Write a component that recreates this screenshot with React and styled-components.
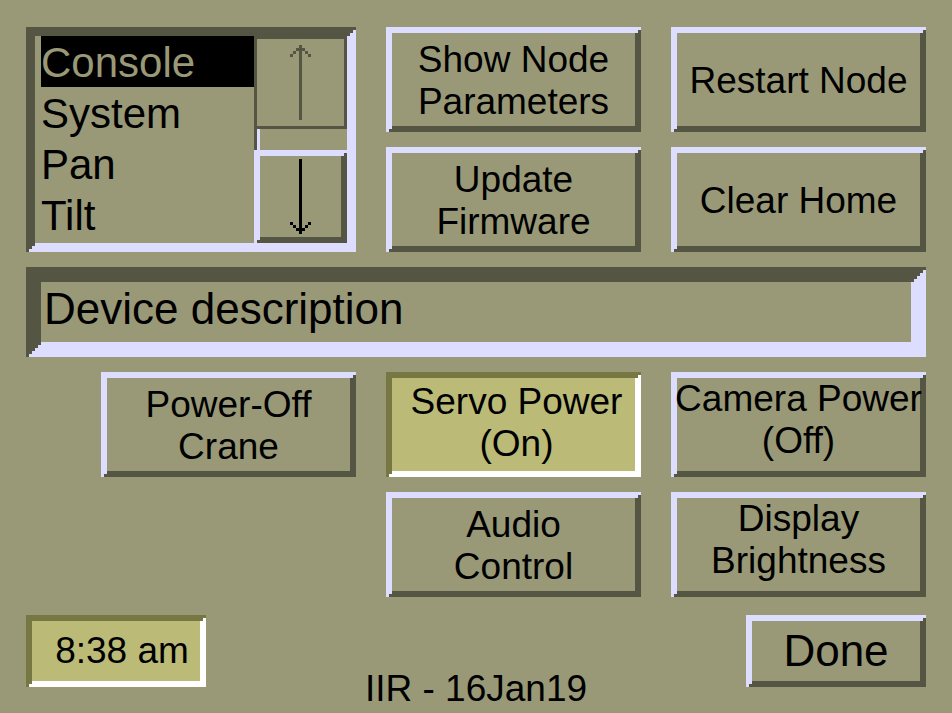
import React, { useState } from "react";
import styled, { createGlobalStyle, css } from "styled-components";

const color = {
  face: "#999977",
  dark: "#555544",
  light: "#ddddff",
  litFace: "#bbbb77",
  litDark: "#777744",
  litLight: "#ffffff",
  ink: "#000000",
};

// Stepped bevel made of 3px rings; the top-left colour wins at the corners.
const bevel = (rings, topLeft, bottomRight) =>
  Array.from({ length: rings }, (_, i) => {
    const d = (i + 1) * 3;
    return `inset ${d}px ${d}px 0 ${topLeft}, inset -${d}px -${d}px 0 ${bottomRight}`;
  }).join(", ");

const GlobalStyle = createGlobalStyle`
  *, *::before, *::after { box-sizing: border-box; }
  body {
    margin: 0;
    background: ${color.face};
    color: ${color.ink};
    font-family: "Liberation Sans", Arial, sans-serif;
    font-size: 37px;
    line-height: 42px;
  }
  button, input { font: inherit; color: inherit; border: 0; border-radius: 0; margin: 0; padding: 0; }
`;

const Screen = styled.main`
  min-height: 100vh;
  padding: 27px 26px 0;
  display: flex;
  flex-direction: column;
  gap: 15px;
`;

const Panel = styled.section`
  display: grid;
  grid-template-columns: minmax(0, 330fr) minmax(0, 255fr) minmax(0, 255fr);
  grid-auto-rows: minmax(105px, auto);
  gap: 15px 30px;
`;

const lifts = { none: "2px 0 0", slight: "0 0 4px 6px", high: "0 0 10px" };

const PushButton = styled.button`
  display: flex;
  flex-direction: column;
  align-items: center;
  justify-content: center;
  white-space: nowrap;
  background: ${color.face};
  box-shadow: ${bevel(2, color.light, color.dark)};

  && {
    padding: ${({ $lift = "none" }) => lifts[$lift]};
  }

  ${({ $lit }) =>
    $lit &&
    css`
      background: ${color.litFace};
      box-shadow: ${bevel(2, color.litDark, color.litLight)};
    `}
`;

const IndentedButton = styled(PushButton)`
  && {
    margin-left: 75px;
  }
`;

const AudioButton = styled(PushButton)`
  grid-column: 2;
`;

const Line = styled.span`
  display: block;
`;

const NodePicker = styled.div`
  grid-row: span 2;
  display: grid;
  grid-template-columns: minmax(0, 1fr) 93px;
  padding: 9px 9px 9px 15px;
  box-shadow: ${bevel(3, color.dark, color.light)};
`;

const NodeList = styled.ul`
  margin: 0;
  padding: 0;
  list-style: none;
  font-size: 42px;
  line-height: 53px;
`;

const NodeItem = styled.li`
  height: 51px;
  cursor: default;
  background: ${({ $selected }) => ($selected ? color.ink : "transparent")};
  color: ${({ $selected }) => ($selected ? color.face : color.ink)};
`;

const ScrollBar = styled.div`
  display: flex;
  flex-direction: column;
`;

const Track = styled.div`
  flex: 1;
  box-shadow: inset 3px 0 0 ${color.dark}, inset 6px 0 0 ${color.light};
`;

const ScrollButton = styled.button`
  height: 93px;
  display: grid;
  place-items: center;
  background: ${color.face};
  box-shadow: ${bevel(2, color.light, color.dark)};

  &:disabled {
    color: ${color.dark};
    box-shadow: inset 0 0 0 3px ${color.dark};
  }
`;

const ArrowSvg = styled.svg`
  width: 21px;
  height: 75px;
  display: block;
  fill: currentColor;
`;

const Description = styled.input`
  width: 100%;
  height: 90px;
  background: ${color.face};
  box-shadow: ${bevel(5, color.dark, color.light)};
  outline: none;

  && {
    padding: 0 15px 6px 18px;
    font-size: 44px;
  }
`;

const Footer = styled.footer`
  margin-top: 3px;
  display: grid;
  grid-template-columns: 180px 1fr 180px;
  min-height: 95px;
`;

const Clock = styled.time`
  height: 72px;
  padding-left: 12px;
  display: grid;
  place-items: center;
  background: ${color.litFace};
  box-shadow: ${bevel(2, color.litDark, color.litLight)};
`;

const Version = styled.span`
  align-self: end;
  text-align: center;
`;

const DoneButton = styled(PushButton)`
  height: 72px;

  && {
    padding: 0;
    font-size: 44px;
  }
`;

const arrowPaths = {
  up: "M3 0h1v25h-1zM2 1h3v1h-3zM1 2h1v1h-1zM5 2h1v1h-1zM0 3h1v1h-1zM6 3h1v1h-1z",
  down: "M3 0h1v25h-1zM2 23h3v1h-3zM1 22h1v1h-1zM5 22h1v1h-1zM0 21h1v1h-1zM6 21h1v1h-1z",
};

function Arrow({ direction }) {
  return (
    <ArrowSvg viewBox="0 0 7 25" shapeRendering="crispEdges" aria-hidden="true">
      <path d={arrowPaths[direction]} />
    </ArrowSvg>
  );
}

const nodes = ["Console", "System", "Pan", "Tilt"];

export default function App() {
  const [selected, setSelected] = useState("Console");

  return (
    <>
      <GlobalStyle />
      <Screen>
        <Panel>
          <NodePicker>
            <NodeList role="listbox" aria-label="Nodes">
              {nodes.map((node) => (
                <NodeItem
                  key={node}
                  role="option"
                  aria-selected={node === selected}
                  $selected={node === selected}
                  onClick={() => setSelected(node)}
                >
                  {node}
                </NodeItem>
              ))}
            </NodeList>
            <ScrollBar>
              <ScrollButton type="button" aria-label="Scroll up" disabled>
                <Arrow direction="up" />
              </ScrollButton>
              <Track />
              <ScrollButton type="button" aria-label="Scroll down">
                <Arrow direction="down" />
              </ScrollButton>
            </ScrollBar>
          </NodePicker>
          <PushButton type="button">
            <Line>Show Node</Line>
            <Line>Parameters</Line>
          </PushButton>
          <PushButton type="button">
            <Line>Restart Node</Line>
          </PushButton>
          <PushButton type="button">
            <Line>Update</Line>
            <Line>Firmware</Line>
          </PushButton>
          <PushButton type="button">
            <Line>Clear Home</Line>
          </PushButton>
        </Panel>

        <Description aria-label="Device description" value="Device description" readOnly />

        <Panel>
          <IndentedButton type="button">
            <Line>Power-Off</Line>
            <Line>Crane</Line>
          </IndentedButton>
          <PushButton type="button" aria-pressed="true" $lit $lift="slight">
            <Line>Servo Power</Line>
            <Line>(On)</Line>
          </PushButton>
          <PushButton type="button" aria-pressed="false" $lift="high">
            <Line>Camera Power</Line>
            <Line>(Off)</Line>
          </PushButton>
          <AudioButton type="button">
            <Line>Audio</Line>
            <Line>Control</Line>
          </AudioButton>
          <PushButton type="button" $lift="high">
            <Line>Display</Line>
            <Line>Brightness</Line>
          </PushButton>
        </Panel>

        <Footer>
          <Clock dateTime="08:38">8:38 am</Clock>
          <Version>IIR - 16Jan19</Version>
          <DoneButton type="button">Done</DoneButton>
        </Footer>
      </Screen>
    </>
  );
}
